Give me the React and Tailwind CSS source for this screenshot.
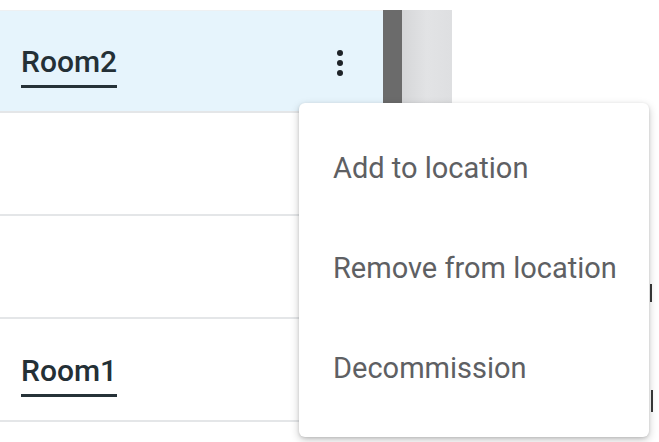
import React from "react";

const rows = [
  { id: "r2", name: "Room2", active: true },
  { id: "r-a", name: "" },
  { id: "r-b", name: "" },
  { id: "r1", name: "Room1" },
];

const menuItems = ["Add to location", "Remove from location", "Decommission"];

const Kebab = () => (
  <svg width="8" height="30" viewBox="0 0 8 30" className="text-[#1f2328]">
    <circle cx="4" cy="5" r="3" fill="currentColor" />
    <circle cx="4" cy="15" r="3" fill="currentColor" />
    <circle cx="4" cy="25" r="3" fill="currentColor" />
  </svg>
);

export default function App() {
  return (
    <div className="relative w-[659px] h-[442px] overflow-hidden bg-white font-['Roboto',sans-serif]">
      <div className="pt-[10px] flex">
        {/* list of rooms */}
        <div className="w-[383px] flex flex-col">
          {rows.map((row) => (
            <div
              key={row.id}
              className={`h-[103px] flex items-center pl-[21px] pr-[38px] border-b-2 border-[#e4e6e8] ${
                row.active ? "bg-[#e6f4fc] border-t border-t-[#eef0f2]" : ""
              }`}
            >
              {row.name && (
                <span className="text-[30px] font-medium text-[#243036] leading-none border-b-[3px] border-[#263238] pb-[8px] pt-[13px]">
                  {row.name}
                </span>
              )}
              {row.active && (
                <div className="ml-auto mr-[1px] pt-[4px]">
                  <Kebab />
                </div>
              )}
            </div>
          ))}
        </div>
        {/* scroll handle next to the selected row */}
        <div className="flex h-[93px]">
          <div className="w-[19px] bg-[#6b6b6b]" />
          <div className="w-[50px] bg-gradient-to-r from-[#d5d6d8] via-[#e2e3e5] to-[#dedfe1]" />
        </div>
      </div>

      {/* text fragments peeking out at the right edge */}
      <div className="absolute left-[650px] top-[284px] w-[2px] h-[18px] bg-[#3a3a3a]" />
      <div className="absolute left-[651px] top-[390px] w-[2px] h-[22px] bg-[#3a3a3a]" />

      {/* context menu */}
      <div className="absolute left-[299px] top-[103px] w-[350px] h-[334px] bg-white rounded-[6px] shadow-[0_3px_8px_rgba(0,0,0,0.22),0_1px_3px_rgba(0,0,0,0.12)] flex flex-col py-[15px]">
        {menuItems.map((item) => (
          <div key={item} className="h-[100px] flex items-center pl-[34px]">
            <span className="text-[29px] text-[#5e6063] leading-none">{item}</span>
          </div>
        ))}
      </div>
    </div>
  );
}
